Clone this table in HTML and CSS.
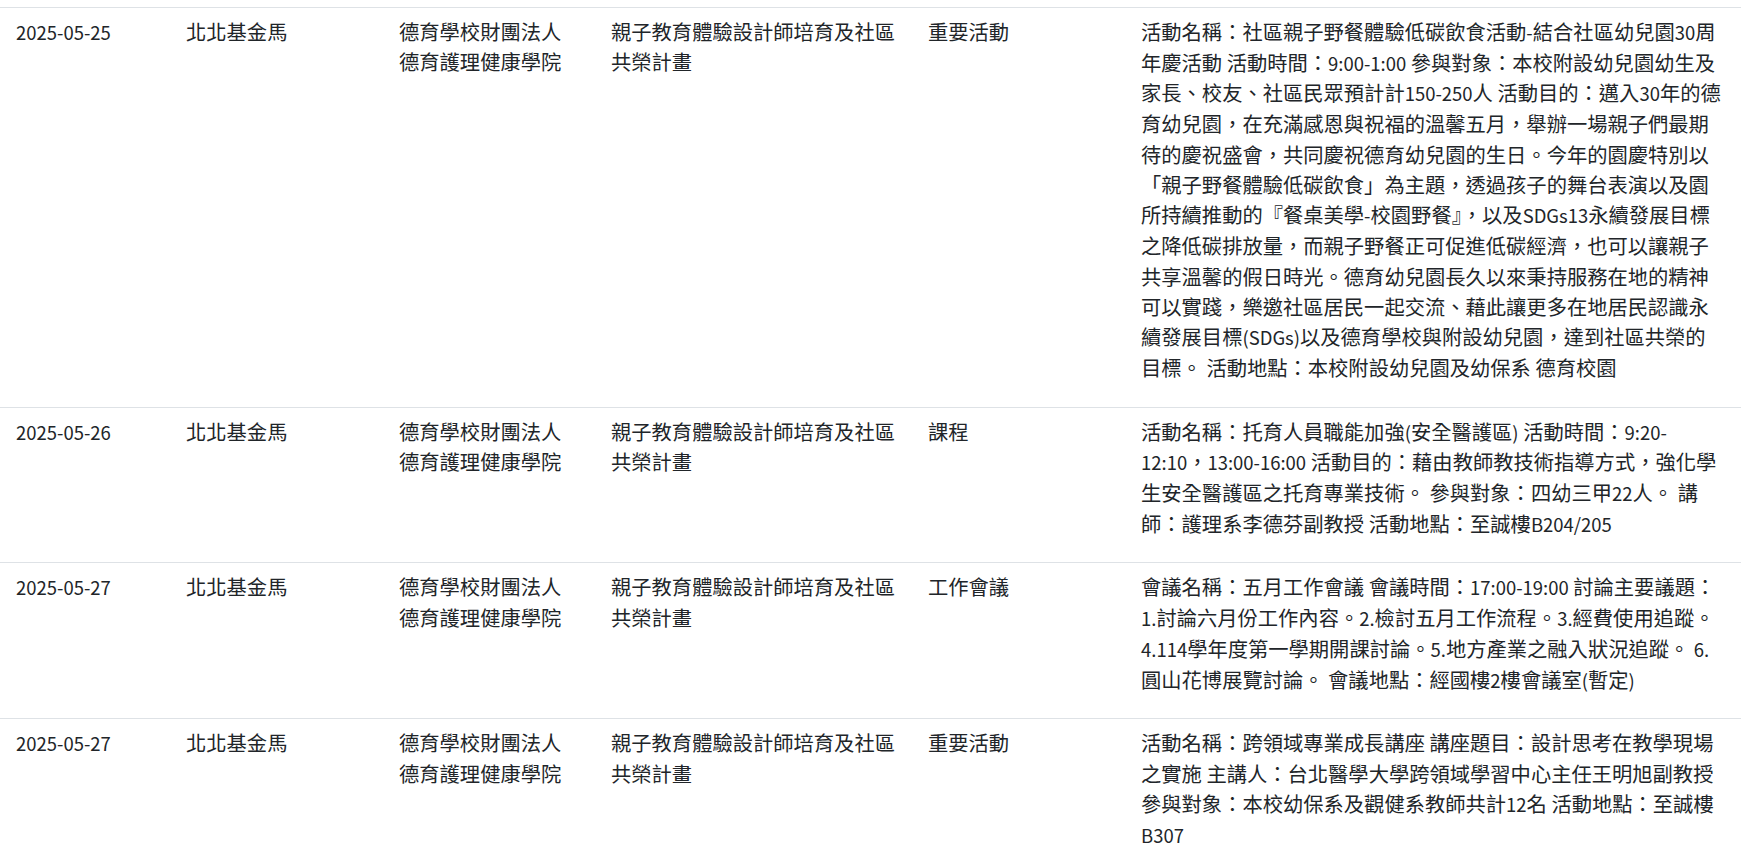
FILE: index.html
```html
<!DOCTYPE html>
<html lang="zh-Hant">
<head>
<meta charset="utf-8">
<title>活動紀錄</title>
<link rel="stylesheet" href="styles.css">
</head>
<body>
<table class="records">
  <colgroup>
    <col class="c-date">
    <col class="c-area">
    <col class="c-org">
    <col class="c-plan">
    <col class="c-type">
    <col class="c-desc">
  </colgroup>
  <tbody>
    <tr>
      <td><span class="lat">2025-05-25</span></td>
      <td>北北基金馬</td>
      <td>德育學校財團法人德育護理健康學院</td>
      <td>親子教育體驗設計師培育及社區共榮計畫</td>
      <td>重要活動</td>
      <td class="desc"><p>活動名稱：社區親子野餐體驗低碳飲食活動<span class="lat">-</span>結合社區幼兒園<span class="lat">30</span>周年慶活動 活動時間：<span class="lat">9:00-1:00</span> 參與對象：本校附設幼兒園幼生及家長、校友、社區民眾預計計<span class="lat">150-250</span>人 活動目的：邁入<span class="lat">30</span>年的德育幼兒園，在充滿感恩與祝福的溫馨五月，舉辦一場親子們最期待的慶祝盛會，共同慶祝德育幼兒園的生日。今年的園慶特別以「親子野餐體驗低碳飲食」為主題，透過孩子的舞台表演以及園所持續推動的『餐桌美學<span class="lat">-</span>校園野餐』，以及<span class="lat">SDGs13</span>永續發展目標之降低碳排放量，而親子野餐正可促進低碳經濟，也可以讓親子共享溫馨的假日時光。德育幼兒園長久以來秉持服務在地的精神可以實踐，樂邀社區居民一起交流、藉此讓更多在地居民認識永續發展目標<span class="lat">(SDGs)</span>以及德育學校與附設幼兒園，達到社區共榮的目標。 活動地點：本校附設幼兒園及幼保系 德育校園</p></td>
    </tr>
    <tr>
      <td><span class="lat">2025-05-26</span></td>
      <td>北北基金馬</td>
      <td>德育學校財團法人德育護理健康學院</td>
      <td>親子教育體驗設計師培育及社區共榮計畫</td>
      <td>課程</td>
      <td class="desc"><p>活動名稱：托育人員職能加強<span class="lat">(</span>安全醫護區<span class="lat">)</span> 活動時間：<span class="lat">9:20-12:10</span>，<span class="lat">13:00-16:00</span> 活動目的：藉由教師教技術指導方式，強化學生安全醫護區之托育專業技術。 參與對象：四幼三甲<span class="lat">22</span>人。 講師：護理系李德芬副教授 活動地點：至誠樓<span class="lat">B204/205</span></p></td>
    </tr>
    <tr>
      <td><span class="lat">2025-05-27</span></td>
      <td>北北基金馬</td>
      <td>德育學校財團法人德育護理健康學院</td>
      <td>親子教育體驗設計師培育及社區共榮計畫</td>
      <td>工作會議</td>
      <td class="desc"><p>會議名稱：五月工作會議 會議時間：<span class="lat">17:00-19:00</span> 討論主要議題：<span class="lat">1.</span>討論六月份工作內容。<span class="lat">2.</span>檢討五月工作流程。<span class="lat">3.</span>經費使用追蹤。<span class="lat">4.114</span>學年度第一學期開課討論。<span class="lat">5.</span>地方產業之融入狀況追蹤。 <span class="lat">6.</span>圓山花博展覽討論。 會議地點：經國樓<span class="lat">2</span>樓會議室<span class="lat">(</span>暫定<span class="lat">)</span></p></td>
    </tr>
    <tr>
      <td><span class="lat">2025-05-27</span></td>
      <td>北北基金馬</td>
      <td>德育學校財團法人德育護理健康學院</td>
      <td>親子教育體驗設計師培育及社區共榮計畫</td>
      <td>重要活動</td>
      <td class="desc"><p>活動名稱：跨領域專業成長講座 講座題目：設計思考在教學現場之實施 主講人：台北醫學大學跨領域學習中心主任王明旭副教授 參與對象：本校幼保系及觀健系教師共計<span class="lat">12</span>名 活動地點：至誠樓<span class="lat">B307</span></p></td>
    </tr>
  </tbody>
</table>
</body>
</html>
```

FILE: styles.css
```css
html, body {
  margin: 0;
  padding: 0;
  background: #ffffff;
}

body {
  font-family: "Noto Sans CJK TC", "Noto Sans", sans-serif;
  font-size: 20.3px;
  line-height: 1.5;
  color: #212529;
  overflow: hidden;
}

.records {
  width: 100%;
  table-layout: fixed;
  border-collapse: collapse;
  margin-top: 7px;
}

.c-date { width: 170px; }
.c-area { width: 213px; }
.c-org  { width: 212px; }
.c-plan { width: 317px; }
.c-type { width: 213px; }
.c-desc { width: auto; }

.records td {
  vertical-align: top;
  padding: 8px 16px;
  border-top: 1px solid #dee2e6;
}

/* Latin runs are set a little narrower than the CJK face's own Latin glyphs */
.lat {
  font-size: 0.91em;
}

.desc p {
  margin: 0 0 16px;
}
```
